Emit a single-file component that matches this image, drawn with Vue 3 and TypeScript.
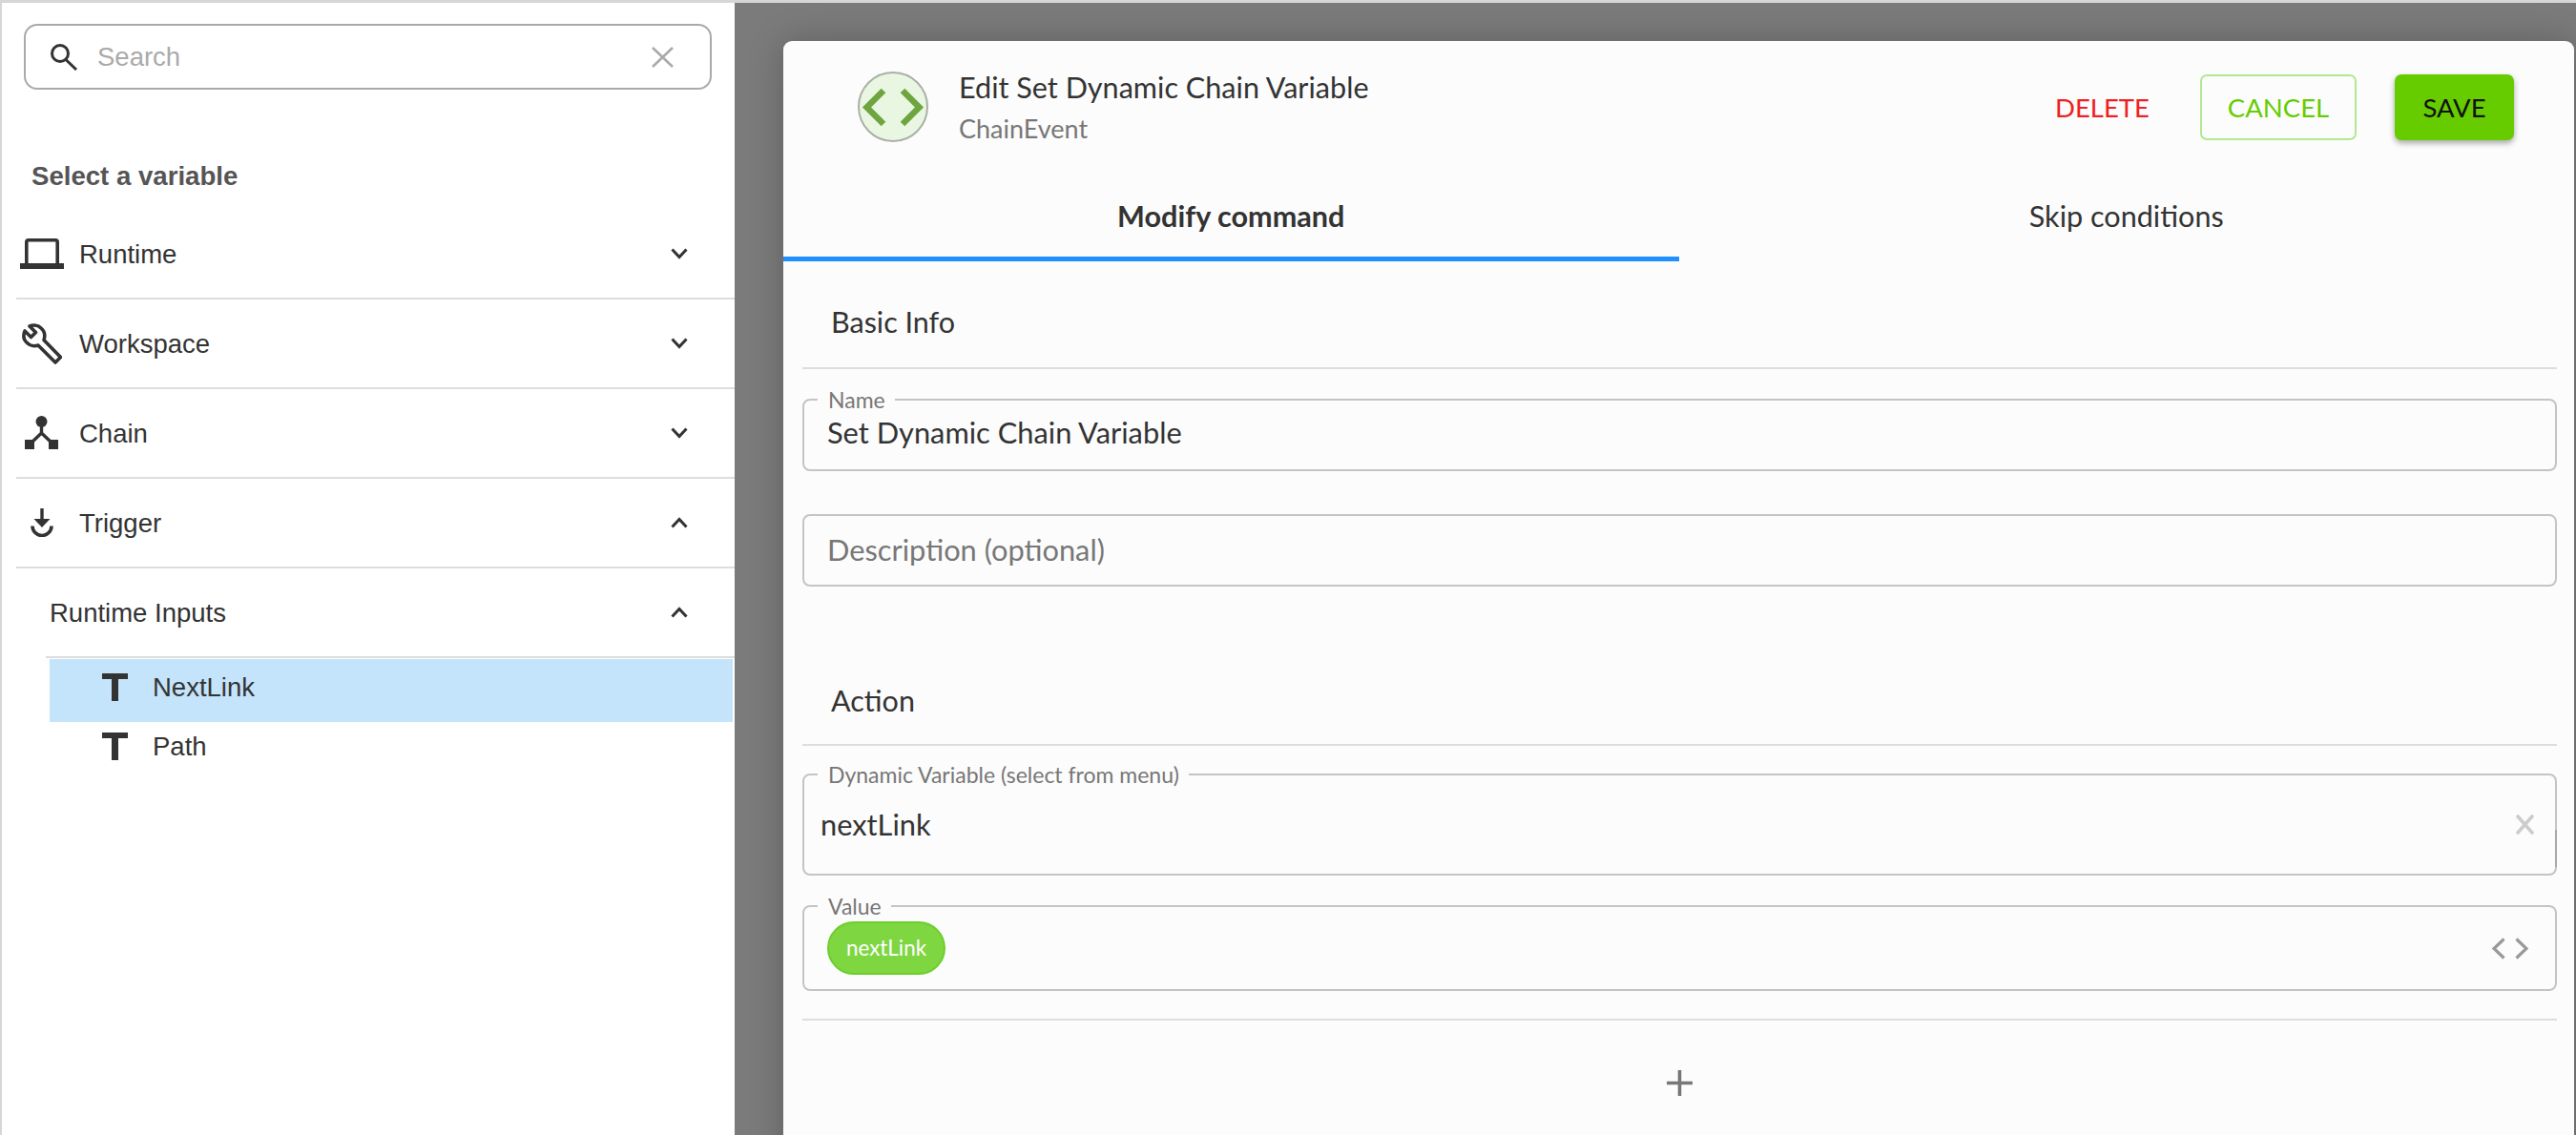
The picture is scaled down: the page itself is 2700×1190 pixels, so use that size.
<script setup lang="ts">
import { ref } from "vue";

type Section = { key: string; label: string; open: boolean };

const sections: Section[] = [
  { key: "runtime", label: "Runtime", open: false },
  { key: "workspace", label: "Workspace", open: false },
  { key: "chain", label: "Chain", open: false },
  { key: "trigger", label: "Trigger", open: true },
];

const inputs = ["NextLink", "Path"];
const selected = ref("NextLink");
const search = ref("");
const commandName = ref("Set Dynamic Chain Variable");
const description = ref("");
</script>

<template>
  <div class="page">
    <aside class="sidebar">
      <label class="search">
        <svg class="search__icon" width="30" height="28" viewBox="0 0 30 28">
          <circle cx="11" cy="10" r="8.5" fill="none" stroke="#333" stroke-width="3" />
          <path d="M17 16.5 28 27" fill="none" stroke="#333" stroke-width="3" />
        </svg>
        <input v-model="search" class="search__input" placeholder="Search" />
        <svg width="23" height="22" viewBox="0 0 23 22">
          <path d="M1 1 22 21M22 1 1 21" fill="none" stroke="#aaa" stroke-width="2.6" />
        </svg>
      </label>

      <h2 class="sidebar__title">Select a variable</h2>

      <div v-for="section in sections" :key="section.key" class="row">
        <span class="row__icon">
          <svg v-if="section.key === 'runtime'" width="46" height="32" viewBox="0 0 46 32">
            <path d="M6.8 27V3.8q0-2 2-2h28.4q2 0 2 2V27" fill="none" stroke="#333" stroke-width="3.6" />
            <rect x="0" y="26" width="46" height="6" fill="#333" />
          </svg>
          <svg v-else-if="section.key === 'workspace'" width="42" height="43" viewBox="0 0 42 43">
            <path
              d="M8 3 14.5 9.5 9.5 14.5 3 8C1 13 2 18 6 21 9 24 14 24 17 23L35 41 40.5 35.5 23 17.5C24.5 13 23.5 8 20 5 17 2 12 1.5 8 3Z"
              fill="none"
              stroke="#333"
              stroke-width="3.6"
              stroke-linejoin="round"
            />
          </svg>
          <svg v-else-if="section.key === 'chain'" width="36" height="36" viewBox="0 0 36 36">
            <circle cx="17.5" cy="6" r="6" fill="#333" />
            <path d="M17.5 10V18L5 30M17.5 18 30 30" fill="none" stroke="#333" stroke-width="3.4" />
            <rect x="0" y="25" width="10" height="10" fill="#333" />
            <rect x="25" y="25" width="10" height="10" fill="#333" />
          </svg>
          <svg v-else width="24" height="30" viewBox="0 0 24 30">
            <path d="M12 0V14" fill="none" stroke="#333" stroke-width="3.4" />
            <path d="M3.5 11H20.5L12 20Z" fill="#333" />
            <path d="M2 18.5A10 10 0 0 0 22 18.5" fill="none" stroke="#333" stroke-width="3.6" />
          </svg>
        </span>
        <span class="row__label">{{ section.label }}</span>
        <svg class="chevron" width="18" height="12" viewBox="0 0 18 12">
          <path :d="section.open ? 'M1.5 10.5 9 2.5 16.5 10.5' : 'M1.5 1.5 9 9.5 16.5 1.5'" fill="none" stroke="#333" stroke-width="3" />
        </svg>
      </div>

      <div class="row row--nested">
        <span class="row__label">Runtime Inputs</span>
        <svg class="chevron" width="18" height="12" viewBox="0 0 18 12">
          <path d="M1.5 10.5 9 2.5 16.5 10.5" fill="none" stroke="#333" stroke-width="3" />
        </svg>
      </div>

      <ul class="items">
        <li
          v-for="item in inputs"
          :key="item"
          :class="{ item: true, 'item--selected': item === selected }"
          @click="selected = item"
        >
          <span class="type-icon"></span>
          <span>{{ item }}</span>
        </li>
      </ul>
    </aside>

    <main class="backdrop">
      <section class="modal">
        <header class="modal__header">
          <svg class="modal__icon" width="74" height="74" viewBox="0 0 74 74">
            <circle cx="37" cy="37" r="36" fill="#e9f6e2" stroke="#aab0a6" stroke-width="2" />
            <path d="M27 20 9.5 37.5 27 55M47 20 64.5 37.5 47 55" fill="none" stroke="#6ea53f" stroke-width="6.5" />
          </svg>
          <div class="modal__heading">
            <h1 class="modal__title">Edit Set Dynamic Chain Variable</h1>
            <div class="modal__subtitle">ChainEvent</div>
          </div>
          <div class="actions">
            <button class="btn btn--delete">DELETE</button>
            <button class="btn btn--cancel">CANCEL</button>
            <button class="btn btn--save">SAVE</button>
          </div>
        </header>

        <nav class="tabs">
          <div class="tab tab--active">Modify command</div>
          <div class="tab">Skip conditions</div>
        </nav>

        <div class="form">
          <h3 class="form__section form__section--first">Basic Info</h3>

          <fieldset class="field field--name">
            <legend>Name</legend>
            <input v-model="commandName" class="field__input" />
          </fieldset>

          <div class="plain-field">
            <input v-model="description" class="field__input" placeholder="Description (optional)" />
          </div>

          <h3 class="form__section form__section--action">Action</h3>

          <fieldset class="field field--dynamic">
            <legend>Dynamic Variable (select from menu)</legend>
            <div class="field__row">
              <span class="dynamic-value">nextLink</span>
              <svg width="19" height="21" viewBox="0 0 19 21">
                <path d="M2 2 17 19M17 2 2 19" fill="none" stroke="#ccc" stroke-width="3.6" stroke-linecap="round" />
              </svg>
            </div>
            <span class="field__thumb"></span>
          </fieldset>

          <fieldset class="field field--value">
            <legend>Value</legend>
            <div class="field__row field__row--value">
              <span class="pill">nextLink</span>
              <svg width="38" height="23" viewBox="0 0 38 23">
                <path d="M12.5 1.5 2 11.5 12.5 21.5M25.5 1.5 36 11.5 25.5 21.5" fill="none" stroke="#999" stroke-width="3.2" />
              </svg>
            </div>
          </fieldset>

          <hr class="form__rule" />

          <div class="add">
            <svg width="27" height="27" viewBox="0 0 27 27">
              <path d="M13.5 0V27M0 13.5H27" fill="none" stroke="#777" stroke-width="3.6" />
            </svg>
          </div>
        </div>
      </section>
    </main>
  </div>
</template>

<style>
html,
body {
  margin: 0;
  background: #fff;
}
</style>

<style scoped>
.page {
  display: flex;
  width: 2700px;
  height: 1190px;
  overflow: hidden;
  border-top: 3px solid #d6d6d6;
  box-sizing: border-box;
}

.sidebar {
  flex: 0 0 770px;
  box-sizing: border-box;
  border-left: 2px solid #d6d6d6;
  background: #fff;
  font-family: "Liberation Sans", Arial, sans-serif;
  color: #333;
}

.search {
  display: flex;
  align-items: center;
  box-sizing: border-box;
  width: 721px;
  height: 69px;
  margin: 22px 0 0 23px;
  padding: 0 38px 0 25px;
  border: 2px solid #aaa;
  border-radius: 14px;
}

.search__input {
  flex: 1;
  min-width: 0;
  margin-left: 20px;
  padding: 0;
  border: 0;
  outline: 0;
  background: transparent;
  font: 27.5px "Liberation Sans", Arial, sans-serif;
  color: #333;
}

.search__input::placeholder {
  color: #aaa;
  opacity: 1;
}

.sidebar__title {
  margin: 73px 0 0 31px;
  font-size: 27.6px;
  line-height: 36px;
  font-weight: 700;
  color: #555;
}

.row {
  display: flex;
  align-items: center;
  box-sizing: border-box;
  height: 94px;
  margin-left: 15px;
  padding-right: 49px;
  border-bottom: 2px solid #ddd;
  font-size: 27.5px;
}

.sidebar__title + .row {
  margin-top: 17px;
}

.row--nested {
  margin-left: 46px;
  padding-left: 4px;
}

.row__icon {
  display: flex;
  justify-content: center;
  flex: 0 0 54px;
  margin-right: 12px;
}

.row__label {
  flex: 1;
  margin-top: 2px;
}

.chevron {
  display: block;
}

.items {
  margin: 1px 0 0 50px;
  padding: 0;
  width: 716px;
  list-style: none;
  font-size: 27.5px;
}

.item {
  display: flex;
  align-items: center;
  gap: 26px;
  box-sizing: border-box;
  height: 66px;
  padding: 0 0 7px 55px;
  cursor: pointer;
}

.item + .item {
  padding-bottom: 15px;
}

.item--selected {
  background: #c3e4fb;
}

.type-icon {
  width: 27px;
  height: 29px;
  background:
    linear-gradient(#333, #333) top / 100% 6px no-repeat,
    linear-gradient(#333, #333) center / 7px 100% no-repeat;
}

.backdrop {
  flex: 1;
  box-sizing: border-box;
  padding: 40px 2px 0 51px;
  background: #7b7b7b;
  overflow: hidden;
}

.modal {
  height: 1200px;
  border-radius: 9px 9px 0 0;
  background: #fcfcfc;
  box-shadow: 0 0 36px rgba(0, 0, 0, 0.22);
  font-family: Lato, "Open Sans", sans-serif;
  color: #333;
}

.modal__header {
  display: flex;
  align-items: flex-start;
  box-sizing: border-box;
  height: 142px;
  padding: 32px 63px 0 78px;
}

.modal__icon {
  flex: none;
}

.modal__heading {
  flex: 1;
  margin-left: 32px;
}

.modal__title {
  margin: -1px 0 0;
  font-size: 30.6px;
  line-height: 36px;
  font-weight: 400;
}

.modal__subtitle {
  margin-top: 10px;
  font-size: 27px;
  line-height: 30px;
  color: #777;
}

.actions {
  display: flex;
  align-items: center;
  margin-top: 3px;
}

.btn {
  height: 69px;
  box-sizing: border-box;
  border: 0;
  border-radius: 7px;
  background: transparent;
  font: 400 27.5px Lato, "Open Sans", sans-serif;
  cursor: pointer;
}

.btn--delete {
  width: 97px;
  margin-right: 55px;
  padding: 0;
  color: #f02020;
}

.btn--cancel {
  width: 164px;
  margin-right: 40px;
  border: 2px solid #b2e88f;
  color: #66cc00;
}

.btn--save {
  width: 125px;
  background: #66cc00;
  color: #111;
  box-shadow: 0 3px 6px rgba(0, 0, 0, 0.35);
}

.tabs {
  display: flex;
}

.tab {
  flex: 1;
  box-sizing: border-box;
  height: 89px;
  padding-top: 24px;
  text-align: center;
  font-size: 30.6px;
  line-height: 36px;
}

.tab--active {
  border-bottom: 5px solid #1e90ff;
  font-weight: 700;
}

.form {
  padding: 0 18px 0 20px;
}

.form__section {
  margin: 0;
  padding-left: 30px;
  border-bottom: 2px solid #ddd;
  font-size: 30.5px;
  line-height: 40px;
  font-weight: 400;
}

.form__section--first {
  margin-top: 43px;
  padding-bottom: 28px;
}

.form__section--action {
  margin-top: 99px;
  padding-bottom: 26px;
}

.field {
  position: relative;
  box-sizing: border-box;
  min-width: 0;
  margin: 19px 0 0;
  padding: 0 22px 0 24px;
  border: 2px solid #c4c4c4;
  border-radius: 8px;
}

.field legend {
  margin-left: -10px;
  padding: 0 10px 0 11px;
  font-size: 23px;
  line-height: 26px;
  color: #777;
}

.field--name {
  height: 88px;
}

.field--dynamic {
  height: 119px;
  margin-top: 17px;
  padding-left: 17px;
}

.field--dynamic legend {
  margin-left: -3px;
}

.field--value {
  height: 102px;
  margin-top: 19px;
  padding-right: 28px;
}

.field__input {
  display: block;
  width: 100%;
  padding: 0;
  border: 0;
  outline: 0;
  background: transparent;
  font: 30.8px/44px Lato, "Open Sans", sans-serif;
  color: #333;
}

.field__input::placeholder {
  color: #777;
  opacity: 1;
}

.plain-field {
  box-sizing: border-box;
  height: 76px;
  margin-top: 45px;
  padding: 14px 22px 0 24px;
  border: 2px solid #c4c4c4;
  border-radius: 8px;
}

.field__row {
  display: flex;
  align-items: center;
  justify-content: space-between;
  height: 78px;
}

.field__row--value {
  height: 56px;
  margin-top: 3px;
}

.dynamic-value {
  font-size: 30.8px;
}

.field__thumb {
  position: absolute;
  top: 45px;
  right: -2px;
  width: 2px;
  height: 39px;
  background: #a8a8a8;
}

.pill {
  box-sizing: border-box;
  height: 56px;
  padding: 0 17.5px 0 18px;
  border: 2px solid #6ccf2c;
  border-radius: 28px;
  background: #7ed641;
  color: #fff;
  font-size: 22.4px;
  line-height: 52px;
}

.form__rule {
  height: 2px;
  margin: 29px 0 0;
  border: 0;
  background: #ddd;
}

.add {
  display: flex;
  justify-content: center;
  margin-top: 52px;
}
</style>
